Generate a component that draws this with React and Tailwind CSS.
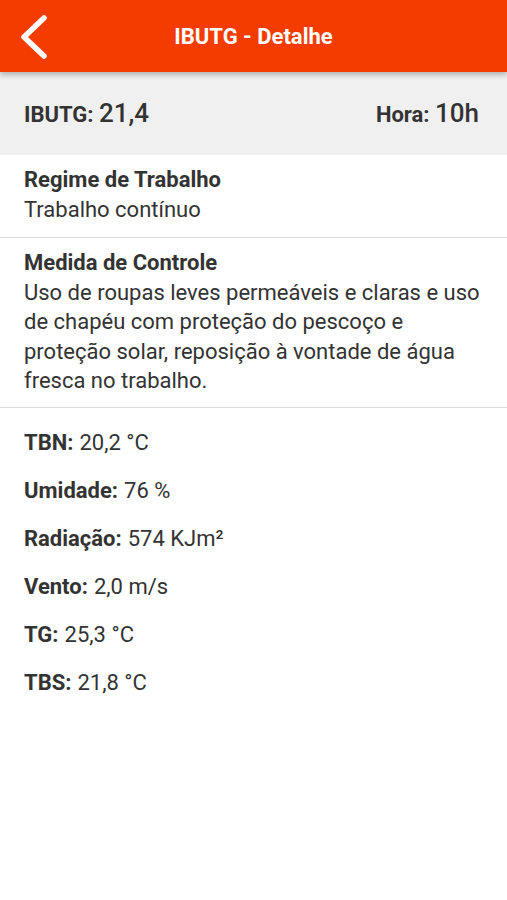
export default function App() {
  const readings = [
    { label: "TBN", value: "20,2 °C" },
    { label: "Umidade", value: "76 %" },
    { label: "Radiação", value: "574 KJm²" },
    { label: "Vento", value: "2,0 m/s" },
    { label: "TG", value: "25,3 °C" },
    { label: "TBS", value: "21,8 °C" },
  ]

  return (
    <div className="min-h-[900px] w-full bg-white text-[#333333]" style={{ fontFamily: "Roboto, 'Noto Sans', sans-serif" }}>
      {/* Toolbar */}
      <div className="relative z-10 flex h-[72px] items-center bg-[#f43c00] shadow-[0_3px_5px_rgba(0,0,0,0.25)]">
        <button className="absolute left-[14px] top-[14px] flex h-[46px] w-[36px] items-center justify-center">
          <svg width="32" height="46" viewBox="0 0 32 46" fill="none">
            <path d="M28 4 L8 23 L28 42" stroke="white" strokeWidth="5.5" strokeLinecap="round" strokeLinejoin="round" />
          </svg>
        </button>
        <h1 className="w-full text-center text-[22px] font-bold text-white">IBUTG - Detalhe</h1>
      </div>

      {/* Summary band */}
      <div className="flex h-[83px] items-center justify-between bg-[#f0f0f0] px-6">
        <p className="text-[22px]">
          <span className="font-bold">IBUTG:</span>{" "}
          <span className="text-[26px] font-medium">21,4</span>
        </p>
        <p className="pr-[4px] text-[22px]">
          <span className="font-bold">Hora:</span>{" "}
          <span className="text-[26px] font-medium">10h</span>
        </p>
      </div>

      {/* Regime */}
      <div className="border-b border-[#dcdcdc] px-6 pt-[10px] pb-[13px] text-[22px] leading-[29.5px]">
        <h2 className="font-bold">Regime de Trabalho</h2>
        <p>Trabalho contínuo</p>
      </div>

      {/* Medida */}
      <div className="border-b border-[#dcdcdc] pl-6 pr-4 pt-[10px] pb-[11px] text-[22px] leading-[29.5px]">
        <h2 className="font-bold">Medida de Controle</h2>
        <p>
          Uso de roupas leves permeáveis e claras e uso de chapéu com proteção do pescoço e proteção solar,
          reposição à vontade de água fresca no trabalho.
        </p>
      </div>

      {/* Readings */}
      <div className="px-6 pt-[11px]">
        {readings.map((r) => (
          <div key={r.label} className="flex h-[48px] items-center text-[22px]">
            <span className="font-bold">{r.label}:</span>
            <span className="ml-[6px]">{r.value}</span>
          </div>
        ))}
      </div>
    </div>
  )
}
